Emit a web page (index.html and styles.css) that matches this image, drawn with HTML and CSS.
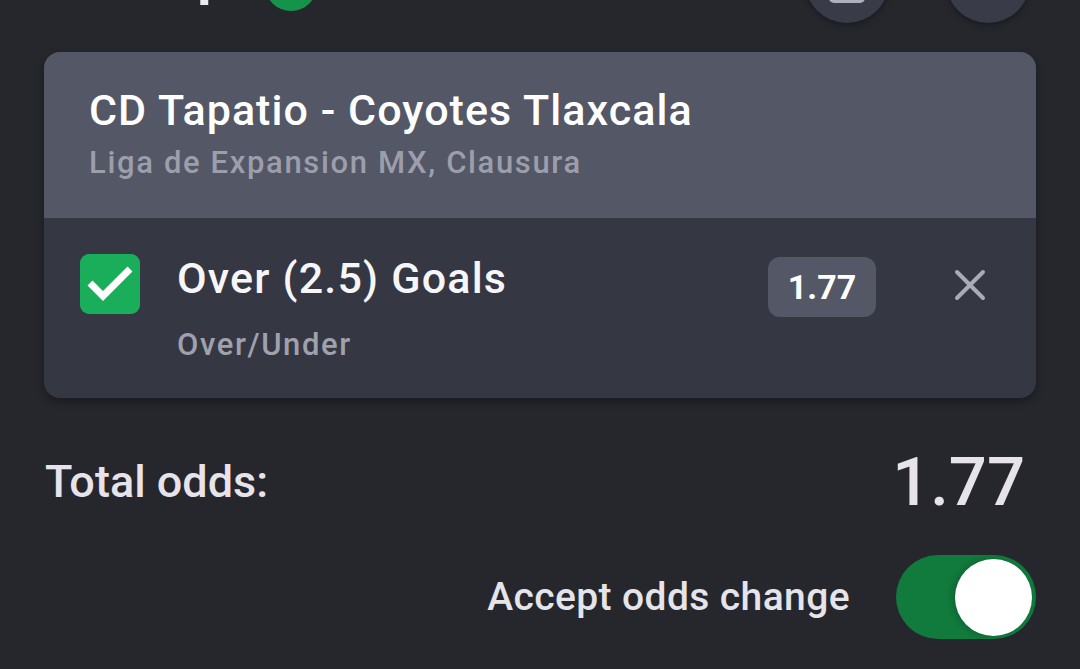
FILE: index.html
```html
<!DOCTYPE html>
<html lang="en">
<head>
<meta charset="utf-8">
<title>Betslip</title>
<link rel="stylesheet" href="styles.css">
</head>
<body>
<div class="page">
  <header class="topbar">
    <div class="topbar-left">
      <h1 class="page-title">Betslip</h1>
      <span class="count-badge">1</span>
    </div>
    <div class="topbar-actions">
      <button class="round-btn" aria-label="Delete all">
        <svg class="round-icon" width="44" height="44" viewBox="0 0 44 44">
          <rect x="2" y="2" width="40" height="6" rx="3" fill="#aeb0bb"/>
          <path d="M4 12 H40 V39 a5 5 0 0 1 -5 5 H9 a5 5 0 0 1 -5 -5 Z" fill="#aeb0bb"/>
        </svg>
      </button>
      <button class="round-btn" aria-label="Close"></button>
    </div>
  </header>

  <section class="card">
    <div class="card-head">
      <div class="match-title">CD Tapatio - Coyotes Tlaxcala</div>
      <div class="match-league">Liga de Expansion MX, Clausura</div>
    </div>
    <div class="card-body">
      <span class="check">
        <svg width="60" height="60" viewBox="0 0 60 60">
          <path d="M10 29 L23 42 L50 15" fill="none" stroke="#ffffff" stroke-width="7"/>
        </svg>
      </span>
      <div class="pick">
        <div class="pick-name">Over (2.5) Goals</div>
        <div class="pick-market">Over/Under</div>
      </div>
      <span class="odds-badge">1.77</span>
      <button class="remove" aria-label="Remove">
        <svg width="32" height="32" viewBox="0 0 32 32">
          <path d="M3 3 L29 29 M29 3 L3 29" stroke="#a9abb6" stroke-width="4" stroke-linecap="round"/>
        </svg>
      </button>
    </div>
  </section>

  <div class="total-row">
    <span class="total-label">Total odds:</span>
    <span class="total-value">1.77</span>
  </div>

  <div class="accept-row">
    <span class="accept-label">Accept odds change</span>
    <span class="toggle"><span class="knob"></span></span>
  </div>
</div>
</body>
</html>
```

FILE: styles.css
```css
* { box-sizing: border-box; }

html, body {
  margin: 0;
  padding: 0;
  background: #25272d;
  overflow: hidden;
}

body {
  font-family: Roboto, "Noto Sans", "Liberation Sans", sans-serif;
  color: #f2f2f5;
  width: 1080px;
  height: 669px;
}

.page {
  display: flex;
  flex-direction: column;
}

/* top bar, mostly scrolled off the top */
.topbar {
  height: 84px;
  margin-top: -61px;
  display: flex;
  justify-content: space-between;
  padding: 0 50px 0 45px;
}

.topbar-left {
  display: flex;
  align-items: flex-start;
  gap: 36px;
}

.page-title {
  margin: 8px 0 0 9px;
  font-size: 56px;
  line-height: 56px;
  font-weight: 700;
  color: #e9e9ef;
}

.count-badge {
  margin-top: 20px;
  width: 52px;
  height: 52px;
  border-radius: 50%;
  background: #16934a;
  color: #fff;
  font-size: 24px;
  line-height: 52px;
  text-align: center;
}

.topbar-actions {
  display: flex;
  gap: 57px;
}

.round-btn {
  width: 84px;
  height: 84px;
  border-radius: 50%;
  border: none;
  padding: 0;
  background: #393b48;
  box-shadow: 0 2px 6px rgba(0, 0, 0, 0.35);
  display: flex;
  align-items: center;
  justify-content: center;
}

.round-icon {
  display: block;
}

/* card */
.card {
  margin: 29px 44px 0 44px;
  border-radius: 16px;
  overflow: hidden;
  background: #353743;
  box-shadow: 0 4px 8px rgba(0, 0, 0, 0.3);
}

.card-head {
  background: #545766;
  padding: 32px 44px 37px 45px;
}

.match-title {
  font-size: 43px;
  line-height: 52px;
  font-weight: 500;
  letter-spacing: 1.05px;
  color: #ffffff;
}

.match-league {
  margin-top: 9px;
  font-size: 31px;
  line-height: 36px;
  font-weight: 500;
  letter-spacing: 1.65px;
  color: #9c9eab;
}

.card-body {
  display: flex;
  align-items: flex-start;
  padding: 36px 50px 35px 36px;
}

.check {
  width: 60px;
  height: 60px;
  border-radius: 9px;
  background: #1aae5b;
  flex: none;
}

.check svg { display: block; }

.pick {
  flex: 1;
  margin-left: 37px;
}

.pick-name {
  font-size: 43px;
  line-height: 48px;
  font-weight: 500;
  letter-spacing: 1.2px;
  color: #f6f6f8;
}

.pick-market {
  margin-top: 25px;
  font-size: 31px;
  line-height: 36px;
  font-weight: 500;
  letter-spacing: 1.6px;
  color: #9fa1ad;
}

.odds-badge {
  margin-top: 3px;
  width: 108px;
  height: 60px;
  border-radius: 12px;
  background: #545766;
  color: #ffffff;
  font-size: 34px;
  font-weight: 700;
  line-height: 60px;
  text-align: center;
  flex: none;
}

.remove {
  margin: 15px 0 0 78px;
  width: 32px;
  height: 32px;
  padding: 0;
  border: none;
  background: none;
  flex: none;
}

.remove svg { display: block; }

/* totals */
.total-row {
  margin-top: 44px;
  height: 80px;
  display: flex;
  align-items: center;
  justify-content: space-between;
  padding: 0 55px 0 45px;
}

.total-label {
  font-size: 45px;
  line-height: 54px;
  font-weight: 500;
  color: #e7e3eb;
}

.total-value {
  font-size: 67px;
  line-height: 80px;
  font-weight: 500;
  color: #e7e3eb;
}

.accept-row {
  margin-top: 33px;
  display: flex;
  align-items: center;
  justify-content: flex-end;
  gap: 46px;
  padding: 0 44px 0 0;
}

.accept-label {
  font-size: 39px;
  line-height: 48px;
  font-weight: 500;
  letter-spacing: 0.4px;
  color: #e4e4ea;
}

.toggle {
  width: 140px;
  height: 84px;
  border-radius: 42px;
  background: #117a3d;
  display: flex;
  align-items: center;
  justify-content: flex-end;
  padding-right: 4px;
}

.knob {
  width: 77px;
  height: 77px;
  border-radius: 50%;
  background: #ffffff;
  box-shadow: -3px 0 6px rgba(0, 0, 0, 0.18);
}
```
